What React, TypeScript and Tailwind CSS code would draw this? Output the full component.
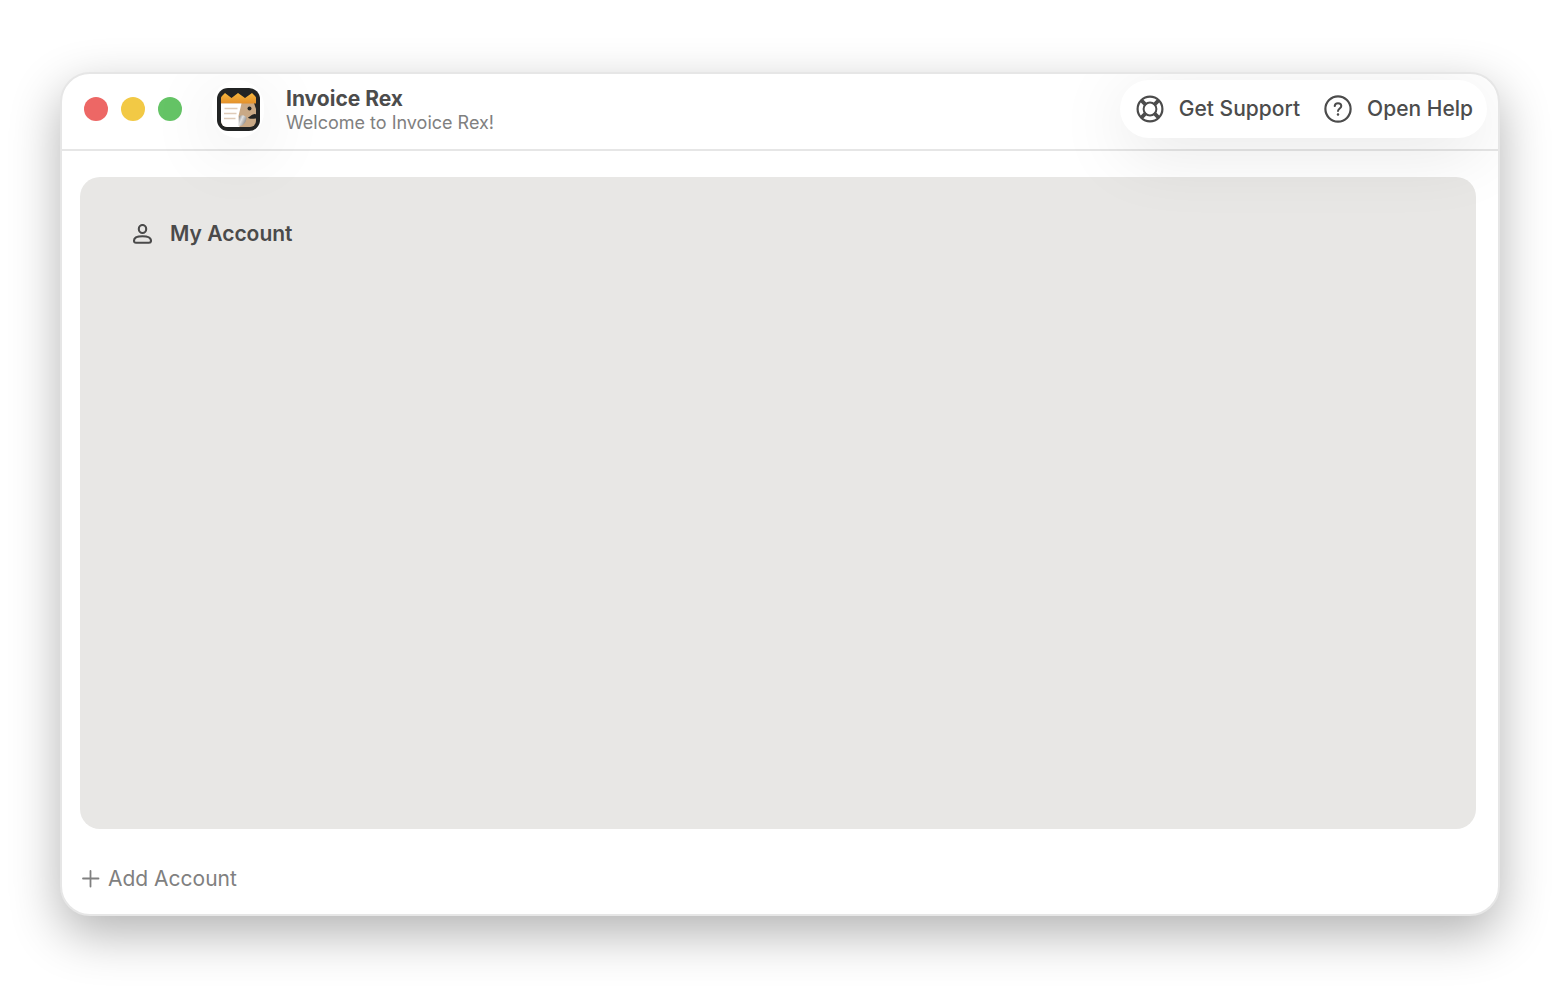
import { useState } from 'react';

const font = "font-['Inter','Liberation_Sans',sans-serif]";

const windowControls = [
  { label: 'Close', color: 'bg-[#ed6765]' },
  { label: 'Minimize', color: 'bg-[#f2c945]' },
  { label: 'Zoom', color: 'bg-[#65c466]' },
];

function AppIcon() {
  return (
    <svg viewBox="0 0 43 43" className="size-[43px]" aria-hidden="true">
      <defs>
        <clipPath id="face">
          <rect x="4" y="4" width="35" height="35" rx="6" />
        </clipPath>
        <linearGradient id="crown" x1="0" y1="0" x2="0" y2="1">
          <stop offset="0" stopColor="#f7b63c" />
          <stop offset="1" stopColor="#e3902b" />
        </linearGradient>
        <linearGradient id="curl" x1="0" y1="0" x2="1" y2="0.6">
          <stop offset="0" stopColor="#777" />
          <stop offset="0.45" stopColor="#e2e2e2" />
          <stop offset="1" stopColor="#858585" />
        </linearGradient>
      </defs>
      <rect width="43" height="43" rx="11" fill="#222424" />
      <g clipPath="url(#face)">
        <path d="M4 15H37L39 21V39H4Z" fill="#c9a986" />
        <path d="M4 9L8 5L14.500 10L21 5L28 10L35 5L39 9V15.500H4Z" fill="url(#crown)" />
        <path d="M4 15.500H24.500L21.500 28L22.500 39H4Z" fill="#fff" />
        <path d="M22 28.500C25 26.500 28 27 29.500 30C29 34.500 26 38.500 21.500 38Z" fill="url(#curl)" />
      </g>
      <path d="M40 26.500C35.500 24.500 34.500 28 31 29.500C33.500 32 36.500 30 40 30.500Z" fill="#222424" />
      <circle cx="32.500" cy="20.500" r="2" fill="#222424" />
      <path d="M7.500 20.500H20.500M7 25.500H19.500M7 30.500H18.500" stroke="#dfcbb8" strokeWidth="1.400" />
    </svg>
  );
}

function LifebuoyIcon() {
  return (
    <svg viewBox="0 0 28 28" fill="none" stroke="currentColor" className="size-7" aria-hidden="true">
      <circle cx="14" cy="14" r="12.400" strokeWidth="2.200" />
      <circle cx="14" cy="14" r="6.400" strokeWidth="2" />
      <path
        d="M5.800 4.500L10.500 9.200M4.500 5.800L9.200 10.500M22.200 4.500L17.500 9.200M23.500 5.800L18.800 10.500M5.800 23.500L10.500 18.800M4.500 22.200L9.200 17.500M22.200 23.500L17.500 18.800M23.500 22.200L18.800 17.500"
        strokeWidth="1.900"
      />
    </svg>
  );
}

function HelpIcon() {
  return (
    <svg
      viewBox="0 0 28 28"
      fill="none"
      stroke="currentColor"
      strokeLinecap="round"
      strokeLinejoin="round"
      className="size-7"
      aria-hidden="true"
    >
      <circle cx="14" cy="14" r="12.600" strokeWidth="2.200" />
      <path d="M10.700 11.100C10.800 9.200 12.100 8.200 14 8.200C15.900 8.200 17.300 9.300 17.300 11.100C17.300 13.500 14 13.600 14 16.100" strokeWidth="2" />
      <circle cx="14" cy="19.500" r="0.700" fill="currentColor" strokeWidth="1.200" />
    </svg>
  );
}

function PersonIcon() {
  return (
    <svg viewBox="0 0 20 20" fill="none" stroke="currentColor" strokeWidth="2.100" className="size-5" aria-hidden="true">
      <ellipse cx="10.500" cy="5" rx="3.700" ry="4" />
      <path d="M2 16.700C2 14 5.400 12.300 10.500 12.300S19 14 19 16.700C19 18 18.300 18.700 17 18.700H4C2.700 18.700 2 18 2 16.700Z" />
    </svg>
  );
}

function PlusIcon() {
  return (
    <svg viewBox="0 0 18 18" stroke="currentColor" strokeWidth="1.800" strokeLinecap="round" className="size-[18px]" aria-hidden="true">
      <path d="M8.500 1V16.500M1 8.500H16.500" />
    </svg>
  );
}

export default function App() {
  const [accounts] = useState(['My Account']);

  return (
    <div className={`flex min-h-screen bg-white px-[60px] pt-[72px] pb-20 ${font}`}>
      <main className="flex flex-1 flex-col overflow-hidden rounded-[30px] border-2 border-[#e6e6e6] bg-white shadow-[0_18px_50px_rgba(0,0,0,0.3)]">
        {/* Title bar */}
        <header className="relative z-10 flex items-center border-b-2 border-[#e6e6e6] pt-[6px] pr-[11px] pb-[11px] pl-[22px]">
          <div className="flex gap-[13px]">
            {windowControls.map((control) => (
              <button key={control.label} aria-label={control.label} className={`size-6 rounded-full ${control.color}`} />
            ))}
          </div>

          <div className="ml-[30px] flex h-[58px] w-[52px] items-center justify-center rounded-full bg-white shadow-[0_14px_70px_rgba(0,0,0,0.1)]">
            <AppIcon />
          </div>

          <div className="ml-[22px] pt-1">
            <h1 className="text-[21px] leading-6 font-bold text-[#4c4c4c]">Invoice Rex</h1>
            <p className="text-[18px] leading-6 text-[#808080]">Welcome to Invoice Rex!</p>
          </div>

          <div className="ml-auto flex h-[58px] items-center gap-6 rounded-full bg-white pr-[14px] pl-4 text-[21px] font-medium text-[#4c4c4c] shadow-[0_14px_70px_rgba(0,0,0,0.1)]">
            <button className="flex items-center gap-[15px]">
              <LifebuoyIcon />
              Get Support
            </button>
            <button className="flex items-center gap-[15px]">
              <HelpIcon />
              Open Help
            </button>
          </div>
        </header>

        {/* Accounts */}
        <ul className="mt-[26px] mr-[22px] ml-[18px] flex-1 rounded-[20px] bg-[#e8e7e5] px-[52px] py-[41px]">
          {accounts.map((account) => (
            <li key={account}>
              <button className="flex h-8 items-center gap-[18px] text-[21px] font-semibold text-[#4a4a4a]">
                <PersonIcon />
                {account}
              </button>
            </li>
          ))}
        </ul>

        <footer className="px-5 pt-[34px] pb-[19px]">
          <button className="flex h-8 items-center gap-2 text-[21px] text-[#808080]">
            <PlusIcon />
            Add Account
          </button>
        </footer>
      </main>
    </div>
  );
}
